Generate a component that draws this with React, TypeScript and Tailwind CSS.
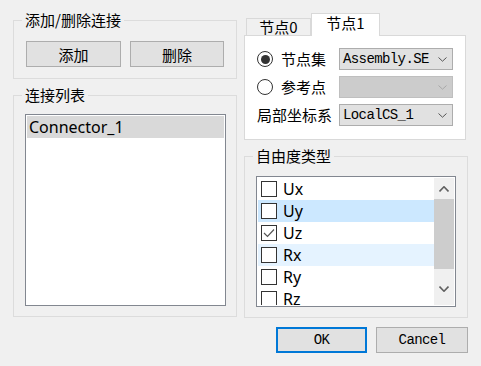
const cjk = "font-['Noto_Sans_CJK_SC',sans-serif]";
const mono = "font-['Liberation_Mono','Noto_Sans_CJK_SC',monospace]";
const latin = "font-['Noto_Sans','Noto_Sans_CJK_SC',sans-serif]";

const dofs = [
  { label: "Ux", checked: false, bg: "" },
  { label: "Uy", checked: false, bg: "bg-[#cce8ff]" },
  { label: "Uz", checked: true, bg: "" },
  { label: "Rx", checked: false, bg: "bg-[#e5f3ff]" },
  { label: "Ry", checked: false, bg: "" },
  { label: "Rz", checked: false, bg: "" },
];

function Chevron({ up = false, color = "#444", w = 9, h = 5, sw = 1 }) {
  return (
    <svg width={w} height={h} viewBox={`0 0 ${w} ${h}`} className="block">
      <path
        d={up ? `M0.5 ${h - 0.5} L${w / 2} 0.8 L${w - 0.5} ${h - 0.5}` : `M0.5 0.5 L${w / 2} ${h - 0.8} L${w - 0.5} 0.5`}
        fill="none"
        stroke={color}
        strokeWidth={sw}
      />
    </svg>
  );
}

function Combo({ text, disabled = false }: { text?: string; disabled?: boolean }) {
  return (
    <div
      className={`flex h-[22px] w-[114px] items-center justify-between border pl-[3px] pr-[5px] ${
        disabled ? "border-[#bfbfbf] bg-[#cccccc]" : "border-[#adadad] bg-[#e1e1e1]"
      }`}
    >
      <span className={`${mono} text-[14px] leading-none tracking-[-0.6px] text-black`}>{text}</span>
      <Chevron color={disabled ? "#a8a8a8" : "#555"} />
    </div>
  );
}

function Radio({ checked }: { checked?: boolean }) {
  return (
    <span className="flex h-[16px] w-[16px] items-center justify-center rounded-full border border-[#333] bg-white">
      {checked && <span className="h-[9px] w-[9px] rounded-full bg-[#333]" />}
    </span>
  );
}

function Group({ title, className, children }: { title: string; className: string; children: React.ReactNode }) {
  return (
    <fieldset className={`border border-[#dcdcdc] ${className}`}>
      <legend className={`${cjk} ml-[8px] px-[3px] text-[15px] leading-[20px] text-black`}>{title}</legend>
      {children}
    </fieldset>
  );
}

export default function App() {
  return (
    <div className="flex h-[366px] w-[481px] flex-col bg-[#f0f0f0] pt-[10px]">
      <div className="flex flex-row pl-[13px]">
        {/* left column */}
        <div className="flex w-[224px] flex-col gap-[6px]">
          <Group title="添加/删除连接" className="h-[69px]">
            <div className="mt-[11px] flex flex-row gap-[9px] pl-[12px]">
              <button className={`${cjk} h-[26px] w-[95px] border border-[#adadad] bg-[#e1e1e1] text-[15px] leading-none text-black`}>
                添加
              </button>
              <button className={`${cjk} h-[26px] w-[94px] border border-[#adadad] bg-[#e1e1e1] text-[15px] leading-none text-black`}>
                删除
              </button>
            </div>
          </Group>
          <Group title="连接列表" className="h-[232px]">
            <div className="ml-[11px] mt-[9px] h-[192px] w-[201px] border border-[#828790] bg-white p-px">
              <div className={`${latin} flex h-[22px] items-center bg-[#d9d9d9] pl-[2px] text-[16px] text-black`}>
                Connector_1
              </div>
            </div>
          </Group>
        </div>

        {/* right column */}
        <div className="ml-[7px] flex w-[224px] flex-col pt-[3px]">
          <div className="flex h-[22px] flex-row items-end pl-[2px]">
            <div className={`${cjk} flex h-[17px] w-[65px] items-center justify-center border border-b-0 border-[#d9d9d9] bg-[#f0f0f0] text-[15px] text-black`}>
              节点0
            </div>
            <div className={`${cjk} relative z-10 -mb-px flex h-[23px] w-[69px] items-center justify-center border border-b-0 border-[#d9d9d9] bg-white pb-[3px] text-[15px] text-black`}>
              节点1
            </div>
          </div>
          <div className="flex h-[105px] w-[222px] flex-col gap-[6px] border border-[#d9d9d9] bg-white pl-[12px] pt-[12px]">
            <div className="flex h-[22px] flex-row items-center">
              <Radio checked />
              <span className={`${cjk} ml-[8px] w-[58px] text-[15px] text-black`}>节点集</span>
              <Combo text="Assembly.SE" />
            </div>
            <div className="flex h-[22px] flex-row items-center">
              <Radio />
              <span className={`${cjk} ml-[8px] w-[58px] text-[15px] text-black`}>参考点</span>
              <Combo disabled />
            </div>
            <div className="flex h-[22px] flex-row items-center">
              <span className={`${cjk} w-[82px] text-[15px] text-black`}>局部坐标系</span>
              <Combo text="LocalCS_1" />
            </div>
          </div>

          <Group title="自由度类型" className="mt-[6px] h-[172px]">
            <div className="ml-[11px] mt-[10px] flex h-[131px] w-[200px] flex-row border border-[#828790] bg-white py-px pl-px">
              <div className="flex w-[176px] flex-col overflow-hidden">
                {dofs.map((d) => (
                  <div key={d.label} className={`flex h-[22px] shrink-0 flex-row items-center pl-[3px] ${d.bg}`}>
                    <span className="flex h-[16px] w-[16px] items-center justify-center border border-[#333] bg-white">
                      {d.checked && (
                        <svg width="12" height="10" viewBox="0 0 12 10">
                          <path d="M1 5 L4.5 8.5 L11 1.5" fill="none" stroke="#555" strokeWidth="1.2" />
                        </svg>
                      )}
                    </span>
                    <span className={`${latin} ml-[6px] text-[16px] leading-none text-black`}>{d.label}</span>
                  </div>
                ))}
              </div>
              <div className="flex w-[20px] flex-col items-center bg-[#f0f0f0]">
                <div className="flex h-[21px] items-center justify-center">
                  <Chevron up color="#606060" w={10} h={6} sw={1.6} />
                </div>
                <div className="h-[70px] w-full bg-[#cdcdcd]" />
                <div className="flex flex-1 items-center justify-center pt-[4px]">
                  <Chevron color="#606060" w={10} h={6} sw={1.6} />
                </div>
              </div>
            </div>
          </Group>
        </div>
      </div>

      <div className="mt-[9px] flex flex-row justify-end gap-[9px] pr-[13px]">
        <button className={`${mono} h-[26px] w-[91px] border-2 border-[#0078d7] bg-[#e1e1e1] text-[14px] tracking-[-0.6px] text-black`}>
          OK
        </button>
        <button className={`${mono} h-[26px] w-[92px] border border-[#adadad] bg-[#e1e1e1] text-[14px] tracking-[-0.6px] text-black`}>
          Cancel
        </button>
      </div>
    </div>
  );
}
